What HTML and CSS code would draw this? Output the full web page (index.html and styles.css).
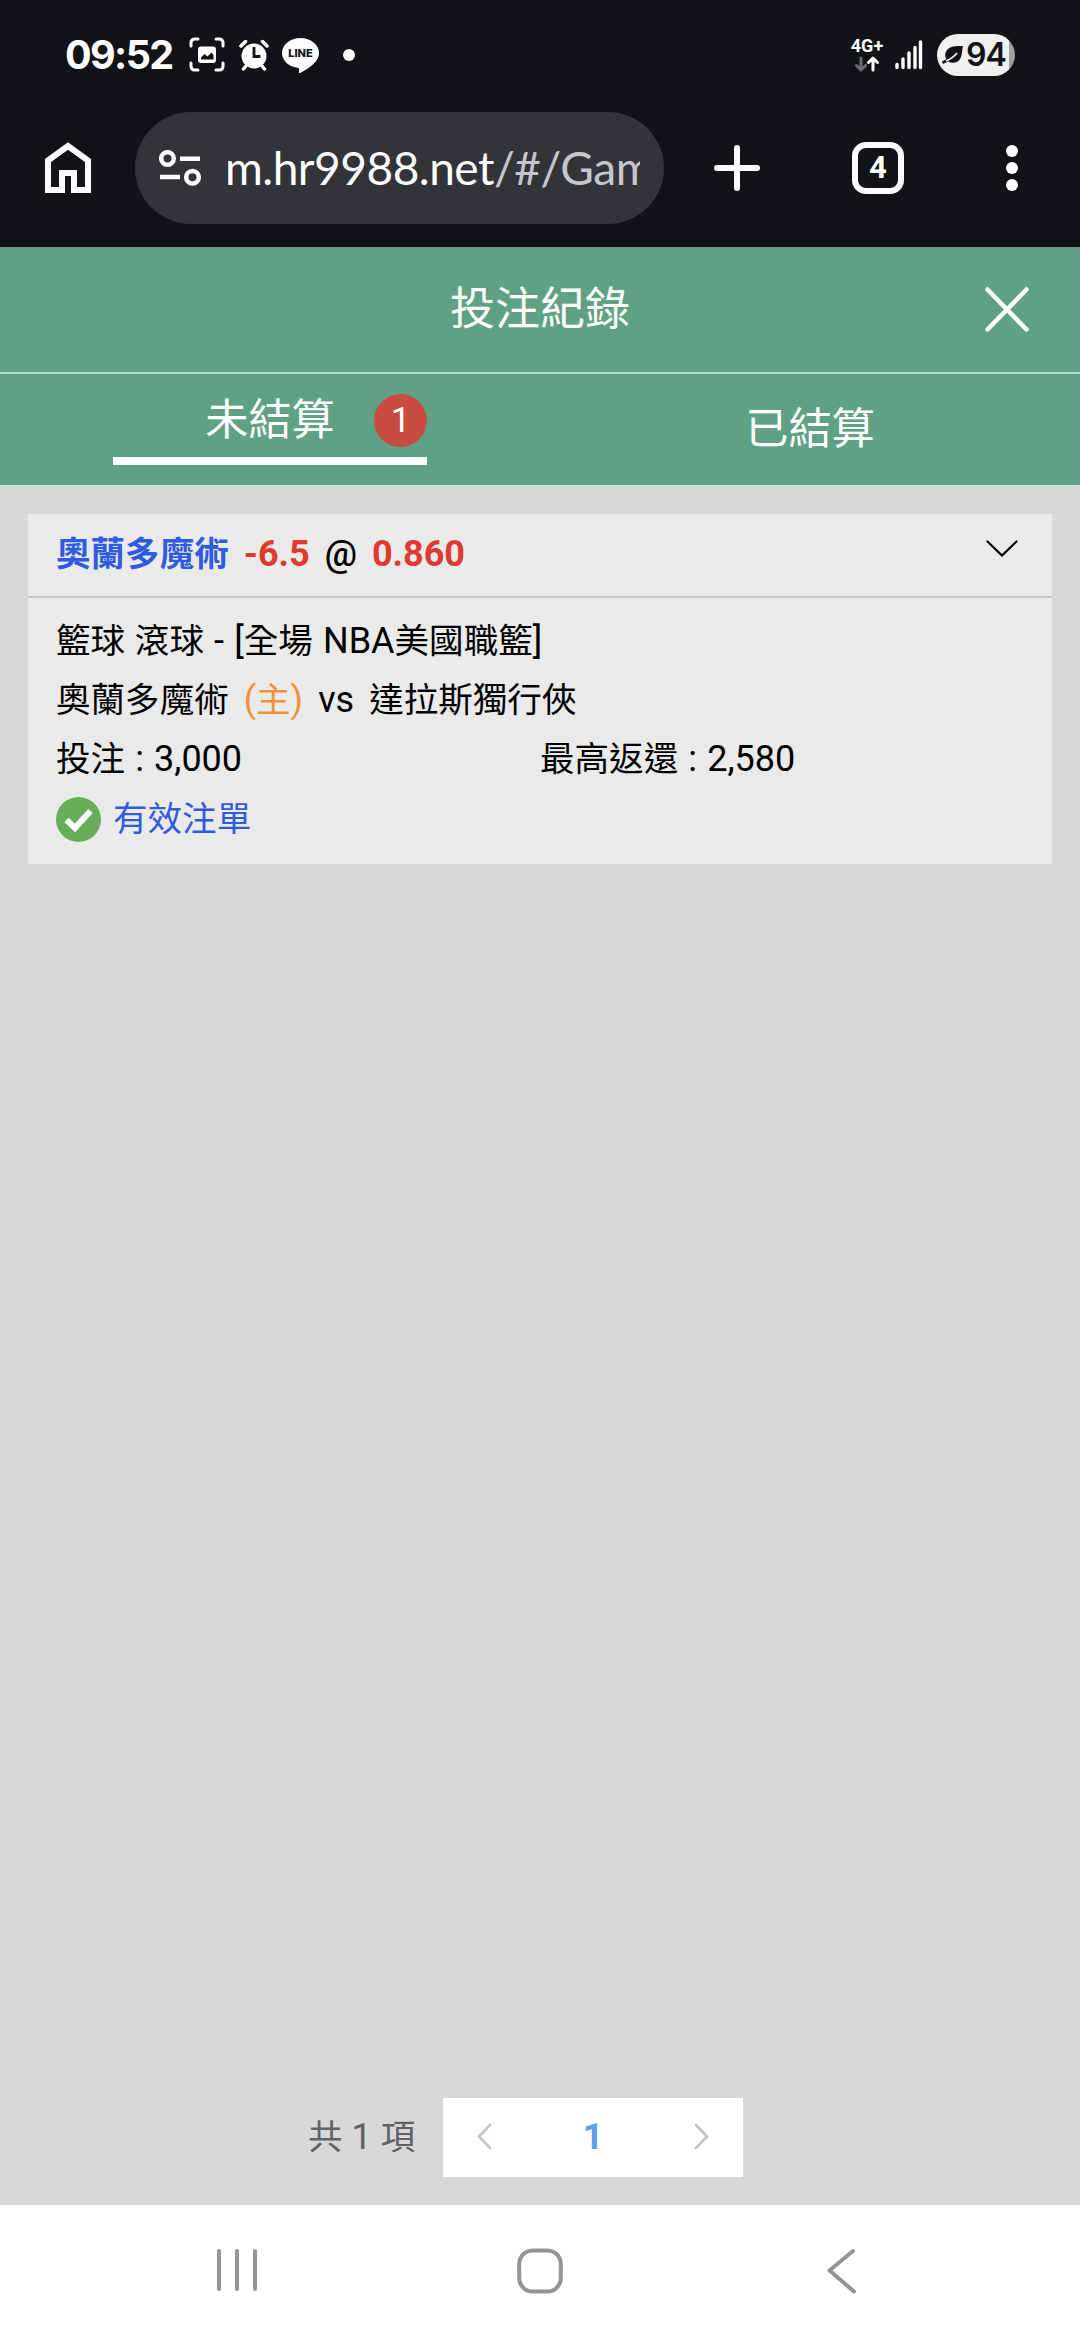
FILE: index.html
```html
<!DOCTYPE html>
<html lang="zh-Hant">
<head>
<meta charset="utf-8">
<title>投注紀錄</title>
<link rel="stylesheet" href="styles.css">
</head>
<body>
<div class="phone">
  <div class="status">
    <span class="clock">09:52</span>
    <svg class="ico-shot" width="36" height="36" viewBox="0 0 36 36" fill="none" stroke="#fff" stroke-width="3" stroke-linecap="round"><path d="M2 9V6q0-4 4-4h3M27 2h3q4 0 4 4v3M34 26v3q0 4-4 4h-3M9 33H6q-4 0-4-4v-3"/><rect x="9" y="9.500" width="18" height="16.500" rx="3" fill="#fff" stroke="none"/><path d="M12 22.500v-2l3.500-3.500 3 2.500 4-4 2 2.500v4.500z" fill="#121317" stroke="none"/></svg>
    <svg class="ico-alarm" width="30" height="33" viewBox="0 0 30 33" fill="none" stroke="#fff" stroke-linecap="round"><circle cx="15" cy="17" r="12.500" fill="#fff" stroke="none"/><path d="M2 7l4.500-4.500M28 7l-4.500-4.500M4.500 30l2.500-3M25.500 30l-2.500-3" stroke-width="3.500"/><path d="M15 9.500v8h5" stroke="#121317" stroke-width="2.800" stroke-linecap="square"/></svg>
    <span class="line-app">
      <svg width="37" height="35" viewBox="0 0 36 35" preserveAspectRatio="none"><path fill="#fff" d="M18 0C8 0 0 6.700 0 15c0 7.400 6.300 13.600 15 14.800 1.500.3 1.800 1 1.600 2.300l-.2 2.200c0 .8.600 1 1.400.5C24 31.500 36 24.500 36 15 36 6.700 28 0 18 0z"/></svg>
      <b>LINE</b>
    </span>
    <i class="more-dot"></i>
    <span class="network"><b>4G+</b>
      <svg width="24" height="16" viewBox="0 0 24 16" fill="none" stroke-width="3" stroke-linecap="round" stroke-linejoin="round"><path stroke="#6d6e72" d="M6 2v12M1.500 9.500L6 14l4.500-4.500"/><path stroke="#fff" d="M18 14V2M13.500 6.500L18 2l4.500 4.500"/></svg>
    </span>
    <svg class="signal" width="28" height="30" viewBox="0 0 28 30" stroke="#fff" stroke-width="3.400" stroke-linecap="round"><path d="M2 24.500v3M8 19v8.500M14 13v14.500M20 7.500v20M25.500 2v25.500"/></svg>
    <span class="battery">
      <svg width="22" height="20" viewBox="0 0 22 20"><path fill="#121317" d="M21 1C14 1 8 1 5 5c-2.500 3.500-2 7-.5 9L0 16.500 1 19l5-2.500c4 2.500 9.500 1.500 12-2.500 2.500-4 2-9 3-13z"/><path d="M4 16Q11 13 15 8" stroke="#f0f0f0" stroke-width="1.800" fill="none"/></svg>
      <b>94</b>
    </span>
  </div>

  <div class="browser">
    <svg class="home" width="46" height="52" viewBox="0 0 46 52" fill="none" stroke="#fdfcff" stroke-width="6"><path d="M3 18.500L23 4l20 14.500V48H29V31H17v17H3z"/></svg>
    <div class="omnibox">
      <svg width="43" height="36" viewBox="0 0 43 36" fill="none" stroke="#fdfcff" stroke-width="4.500"><circle cx="8.500" cy="8.500" r="6.300"/><path d="M21 8.700h20M1 27h20"/><circle cx="33.500" cy="27.300" r="6.300"/></svg>
      <div class="url">m.hr9988.net<span>/#/Gam</span></div>
    </div>
    <svg class="plus" width="46" height="46" viewBox="0 0 46 46" stroke="#fdfcff" stroke-width="6" stroke-linecap="round"><path d="M23 3v40M3 23h40"/></svg>
    <div class="tabs-count">4</div>
    <svg class="kebab" width="12" height="46" viewBox="0 0 12 46" fill="#fdfcff"><circle cx="6" cy="6" r="6"/><circle cx="6" cy="23" r="6"/><circle cx="6" cy="40" r="6"/></svg>
  </div>

  <header class="title-bar">
    <h1>投注紀錄</h1>
    <svg width="44" height="45" viewBox="0 0 44 45" stroke="#fff" stroke-width="4.500" stroke-linecap="round"><path d="M2.500 2.500l39 40M41.500 2.500l-39 40"/></svg>
  </header>
  <nav class="tabs">
    <div class="tab"><div class="tab-active">未結算<span class="badge">1</span></div></div>
    <div class="tab">已結算</div>
  </nav>

  <main class="content">
    <section class="card">
      <div class="card-head">
        <span class="team zh">奧蘭多魔術</span><span class="odds">-6.5</span><span class="at">@</span><span class="odds">0.860</span>
        <svg width="32" height="17" viewBox="0 0 32 17" fill="none" stroke="#000" stroke-width="2.200" stroke-linecap="round"><path d="M1.500 1.500L16 15.500 30.500 1.500"/></svg>
      </div>
      <div class="card-body">
        <div class="row"><span class="zh">籃球 滾球</span> - [<span class="zh">全場</span> NBA<span class="zh">美國職籃</span>]</div>
        <div class="row match"><span class="zh">奧蘭多魔術</span><span class="host">(<span class="zh">主</span>)</span><span>vs</span><span class="zh">達拉斯獨行俠</span></div>
        <div class="row money"><div><span class="zh">投注</span> : 3,000</div><div><span class="zh">最高返還</span> : 2,580</div></div>
        <div class="row valid">
          <svg width="45" height="45" viewBox="0 0 45 45"><circle cx="22.500" cy="22.500" r="22.500" fill="#67ad5b"/><path d="M10.500 23l8.500 8 15.500-17" fill="none" stroke="#fff" stroke-width="6"/></svg>
          <span class="zh">有效注單</span>
        </div>
      </div>
    </section>
    <div class="pager">
      <div class="total"><span class="zh">共</span> 1 <span class="zh">項</span></div>
      <div class="pages">
        <svg width="15" height="27" viewBox="0 0 15 27" fill="none" stroke="#c0c4cc" stroke-width="2.600" stroke-linecap="round"><path d="M13 2L2 13.500 13 25"/></svg>
        <b>1</b>
        <svg width="15" height="27" viewBox="0 0 15 27" fill="none" stroke="#c0c4cc" stroke-width="2.600" stroke-linecap="round"><path d="M2 2l11 11.500L2 25"/></svg>
      </div>
    </div>
  </main>

  <footer class="sysnav">
    <svg width="40" height="44" viewBox="0 0 40 44" stroke="#949494" stroke-width="4" stroke-linecap="round"><path d="M2 3v38M20 3v38M38 3v38"/></svg>
    <svg class="nav-home" width="46" height="46" viewBox="0 0 46 46" fill="none" stroke="#949494" stroke-width="4"><rect x="2.200" y="2.500" width="41.600" height="41" rx="13.500"/></svg>
    <svg width="29" height="46" viewBox="0 0 29 46" fill="none" stroke="#949494" stroke-width="4" stroke-linecap="round" stroke-linejoin="round"><path d="M26 3L2.500 22.500 27 43.500"/></svg>
  </footer>
</div>
</body>
</html>
```
FILE: styles.css
```css
* { box-sizing: border-box; }
body { margin: 0; font-family: Roboto, "Noto Sans CJK TC", sans-serif; color: #000; }
svg { display: block; flex: none; }
.phone { width: 1080px; height: 2340px; display: flex; flex-direction: column; overflow: hidden; background: #d8d8d8; }

/* Han characters run slightly smaller than the Latin text beside them */
.zh { font-size: .96em; }

.status { height: 110px; background: #121317; display: flex; align-items: center; padding: 0 65px 0 65px; color: #fff; }
.clock { width: 124px; font: 700 39.500px/110px Inter, sans-serif; letter-spacing: -1.600px; white-space: nowrap; }
.ico-alarm { margin-left: 14px; }
.line-app { position: relative; margin-left: 13px; }
.line-app b { position: absolute; left: 0; top: 7px; width: 37px; text-align: center; font: 800 11px/16px Inter, sans-serif; color: #121317; }
.more-dot { width: 12px; height: 12px; border-radius: 50%; background: #fff; margin-left: 24px; }
.network { margin-left: auto; width: 34px; height: 34px; display: flex; flex-direction: column; gap: 3px; align-items: center; }
.network b { font: 700 18px/15px Roboto, sans-serif; white-space: nowrap; }
.network svg { margin-right: 1px; }
.signal { margin-left: 11px; }
.battery { width: 78px; height: 42px; margin-left: 14px; border-radius: 21px; background: linear-gradient(90deg, #f0f0f0 72px, #a0a0a0 72px); display: flex; align-items: center; padding-left: 5px; gap: 2px; color: #121317; }
.battery b { font: 600 32px/42px Inter, sans-serif; letter-spacing: -1px; }

.browser { height: 137px; background: #121317; display: flex; align-items: center; padding: 1px 0 22px 45px; }
.omnibox { width: 529px; height: 112px; margin-left: 44px; border-radius: 56px; background: #333438; display: flex; align-items: center; padding: 0 23px 0 24px; }
.url { width: 415px; margin-left: 23px; overflow: hidden; white-space: nowrap; font: 400 46px/60px Lato, sans-serif; letter-spacing: -.5px; color: #fdfcff; }
.url span { color: #c6c6ce; }
.plus { margin-left: 50px; }
.tabs-count { width: 52px; height: 52px; margin-left: 92px; border: 6px solid #fdfcff; border-radius: 14px; color: #fdfcff; font: 700 31px/40px Roboto, sans-serif; text-align: center; }
.kebab { margin-left: 102px; }

.title-bar { height: 127px; border-top: 2px solid #749088; border-bottom: 2px solid #bbd9c9; background: #5ea184; display: grid; grid-template-columns: 1fr 180px 1fr; align-items: center; color: #fff; }
.title-bar h1 { grid-column: 2; margin: 0 0 2px; font-size: 45px; line-height: 66px; font-weight: 400; white-space: nowrap; }
.title-bar svg { justify-self: end; margin: 0 51px 3px 0; }
.tabs { height: 113px; background: #5ea184; border-bottom: 2px solid #cbe6da; display: flex; color: #fff; font-size: 43.200px; }
.tab { flex: 1; display: flex; align-items: center; justify-content: center; line-height: 64px; }
.tab-active { position: relative; width: 314px; height: 76px; margin-top: -7px; padding-bottom: 6px; border-bottom: 8px solid #fff; text-align: center; line-height: 63px; margin-bottom: -1px; }
.badge { position: absolute; right: 0; top: 5px; width: 53px; height: 53px; border-radius: 50%; background: #c84d41; font-size: 35px; line-height: 53px; }

.content { height: 1718px; padding: 27px 28px 28px; display: flex; flex-direction: column; justify-content: space-between; font-size: 36px; }
.card { height: 350px; background: #eaeaea; }
.card-head { height: 84px; border-bottom: 2px solid #cacaca; display: flex; align-items: baseline; line-height: 81px; padding: 0 34px 0 28px; gap: 15px; font-weight: 700; }
.team { color: #2f5be0; }
.odds { color: #de3a2e; }
.at { font-weight: 500; }
.card-head svg { align-self: center; margin: 0 0 13px auto; }
.card-body { padding: 14px 28px 0; word-spacing: 1.200px; }
.row { height: 59px; line-height: 59px; white-space: nowrap; }
.match { display: flex; align-items: baseline; gap: 15px; }
.host { color: #ec923b; }
.money { display: grid; grid-template-columns: 484px 1fr; }
.valid { display: flex; align-items: center; gap: 12px; color: #2f5be0; height: 60px; }
.pager { display: flex; align-items: center; margin-left: 280px; height: 79px; gap: 25px; }
.total { width: 110px; margin-bottom: 7px; color: #606266; white-space: nowrap; }
.pages { width: 300px; height: 79px; background: #fff; display: flex; align-items: center; justify-content: space-between; padding: 0 34px 2px; color: #609bea; }

.sysnav { height: 135px; background: #fff; display: flex; justify-content: space-between; padding: 43px 224px 0 217px; }
.nav-home { margin-right: 5px; }
```
